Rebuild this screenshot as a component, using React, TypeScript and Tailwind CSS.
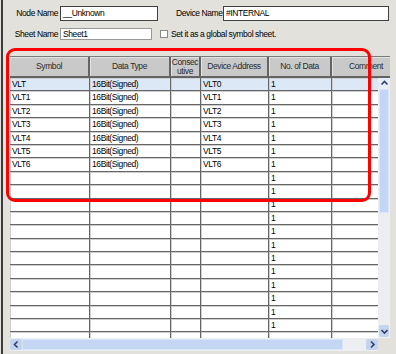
import React from 'react'

const font = "font-['Liberation_Sans','Arial',sans-serif] text-[8.5px] tracking-[-0.4px] leading-none"

const cols = [
  { w: 'w-[80px]', label: 'Symbol' },
  { w: 'w-[81px]', label: 'Data Type' },
  { w: 'w-[30px]', label: 'Consec\nutive' },
  { w: 'w-[68px]', label: 'Device Address' },
  { w: 'w-[63px]', label: 'No. of Data' },
  { w: 'w-[70px]', label: 'Comment' },
]

const filled = [
  ['VLT', '16Bit(Signed)', 'VLT0'],
  ['VLT1', '16Bit(Signed)', 'VLT1'],
  ['VLT2', '16Bit(Signed)', 'VLT2'],
  ['VLT3', '16Bit(Signed)', 'VLT3'],
  ['VLT4', '16Bit(Signed)', 'VLT4'],
  ['VLT5', '16Bit(Signed)', 'VLT5'],
  ['VLT6', '16Bit(Signed)', 'VLT6'],
]

// 19 full rows fit above the scrollbar; the 20th is cut, as in the screen
const rows = Array.from({ length: 19 }, (_, i) => {
  const r = filled[i]
  return r ? [r[0], r[1], '', r[2], '1', ''] : ['', '', '', '', '1', '']
})

function Chevron({ dir }: { dir: 'up' | 'down' | 'left' | 'right' }) {
  const d = {
    up: 'M1.5 5.5 L4.5 2.5 L7.5 5.5',
    down: 'M1.5 3 L4.5 6 L7.5 3',
    left: 'M5.5 1.5 L2.5 4.5 L5.5 7.5',
    right: 'M3 1.5 L6 4.5 L3 7.5',
  }[dir]
  return (
    <svg width="9" height="9" viewBox="0 0 9 9">
      <path d={d} fill="none" stroke="#2d3f72" strokeWidth="1.6" />
    </svg>
  )
}

export default function App() {
  return (
    <div className={`w-[396px] h-[354px] bg-[#e2e1dc] relative overflow-hidden text-black ${font}`}>
      <div className="absolute left-px top-0 bottom-0 w-[1.5px] bg-[#3c3c3c]" />

      {/* node / device name */}
      <div className="flex items-center pt-[6px] h-[21px]">
        <div className="w-[58px] text-right">Node Name</div>
        <div className="ml-[2px] w-[98px] h-[15px] bg-white border border-[#404040] flex items-center px-[2px]">__Unknown</div>
        <div className="ml-[18px] w-[47px]">Device Name</div>
        <div className="w-[166px] h-[15px] bg-white border border-[#404040] flex items-center px-[2px]">#INTERNAL</div>
      </div>

      {/* sheet name */}
      <div className="flex items-center mt-[7px] h-[12px]">
        <div className="w-[58px] text-right">Sheet Name</div>
        <div className="ml-[2px] w-[92px] h-[12px] bg-white border border-[#9a9a9a] flex items-center px-[2px]">Sheet1</div>
        <div className="ml-[8px] w-[8px] h-[8px] bg-white border border-[#8a8a8a]" />
        <div className="ml-[3px]">Set it as a global symbol sheet.</div>
      </div>

      {/* table */}
      <div className="ml-[10px] mt-[16px] w-[380px]">
        <div className="flex h-[22px] overflow-hidden border-t border-[#7a7a7a] bg-[#c9c9c9]">
          {cols.map((c, i) => (
            <div
              key={i}
              className={`${c.w} shrink-0 h-full border-r-2 border-b-2 border-[#646464] shadow-[inset_1px_1px_0_#e2e2e2] flex items-center justify-center text-center whitespace-pre text-[#2a2a2a] leading-[9px]`}
            >
              {c.label}
            </div>
          ))}
        </div>

        <div className="flex">
          <div className="w-[368px] h-[260px] overflow-hidden">
            {rows.map((r, i) => (
              <div key={i} className={`flex h-[13.4px] ${i === 0 ? 'bg-[#dde8f6]' : 'bg-white'}`}>
                {cols.map((c, j) => (
                  <div
                    key={j}
                    className={`${c.w} shrink-0 h-full border-r border-b border-[#666666] shadow-[inset_1px_1px_0_#cfcfcf] flex items-center pl-[2px] whitespace-nowrap overflow-hidden`}
                  >
                    {r[j]}
                  </div>
                ))}
              </div>
            ))}
            <div className="flex h-[13.4px] bg-white">
              {cols.map((c, j) => (
                <div key={j} className={`${c.w} shrink-0 h-full border-r border-[#666666] shadow-[inset_1px_1px_0_#cfcfcf]`} />
              ))}
            </div>
          </div>

          {/* vertical scrollbar */}
          <div className="w-[12px] h-[260px] flex flex-col bg-[#eceef2]">
            <div className="h-[11px] flex items-center justify-center bg-[#e6edf8]">
              <Chevron dir="up" />
            </div>
            <div className="h-[124px] mx-[1px] bg-[#c3d6f3] border border-[#d9e5f8]" />
            <div className="flex-1" />
            <div className="h-[12px] mx-[1px] mb-[1px] flex items-center justify-center bg-[#c4d3ee] rounded-[2px]">
              <Chevron dir="down" />
            </div>
          </div>
        </div>

        {/* horizontal scrollbar */}
        <div className="flex h-[13px]">
          <div className="w-[368px] flex bg-[#eceef2]">
            <div className="w-[12px] flex items-center justify-center bg-[#c4d3ee] rounded-[2px] my-[1px]">
              <Chevron dir="left" />
            </div>
            <div className="w-[321px] bg-[#c3d6f3] border border-[#d9e5f8] my-[1px]" />
            <div className="flex-1" />
            <div className="w-[12px] flex items-center justify-center bg-[#c4d3ee] rounded-[2px] my-[1px]">
              <Chevron dir="right" />
            </div>
          </div>
          <div className="w-[12px]" />
        </div>
      </div>

      {/* red highlight */}
      <div className="absolute left-[6px] top-[48px] w-[365px] h-[154px] border-[3px] border-[#ff0000] rounded-[9px] pointer-events-none" />
    </div>
  )
}
